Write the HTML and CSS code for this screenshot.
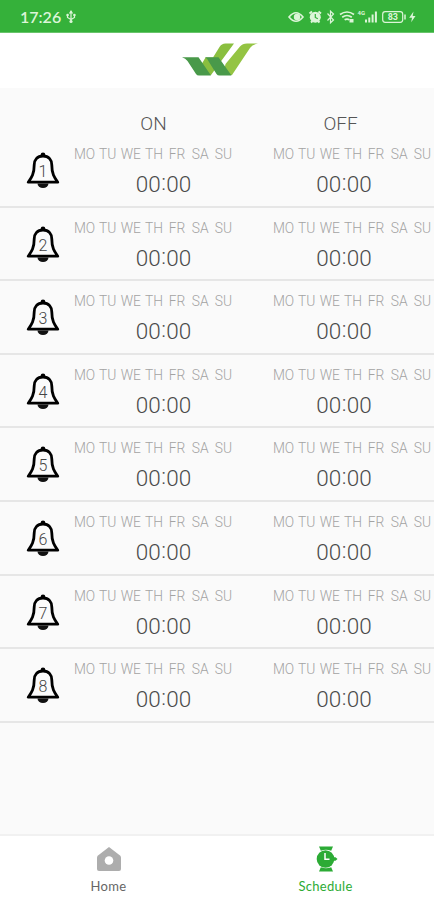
FILE: index.html
```html
<!DOCTYPE html>
<html lang="en">
  <head>
    <meta charset="UTF-8" />
    <meta name="viewport" content="width=device-width, initial-scale=1.0" />
    <title>Schedule</title>
    <link rel="stylesheet" href="styles.css">
  </head>
  <body>
    <div class="status-bar">
      <div class="status-left">
        <span class="clock">17:26</span>
        <svg class="usb" width="10" height="14" viewBox="0 0 10 14">
          <path d="M5 1v11M1.500 5v2.500L5 9.500l3.500-2V5" fill="none" stroke="currentColor" stroke-width="1.200" />
          <path d="M5 0L7.200 3.500H2.800Z" fill="currentColor" />
          <circle cx="5" cy="11.500" r="1.600" fill="currentColor" />
          <circle cx="1.600" cy="5" r="1.300" fill="currentColor" />
          <circle cx="8.400" cy="5" r="1.300" fill="currentColor" />
        </svg>
      </div>
      <svg class="status-icons" width="130" height="16" viewBox="288 9 130 16" fill="none" stroke="currentColor">
        <path d="M289 17q7-8.500 14 0q-7 8.500-14 0Z" stroke-width="1.600" />
        <circle cx="297" cy="17" r="3.200" fill="currentColor" stroke="none" />
        <circle cx="315.300" cy="17.200" r="5.500" fill="currentColor" stroke="none" />
        <path d="M309.500 13.500l2.500-2M321 13.500l-2.500-2M311 22.500l1.500-1.500M319.500 22.500L318 21" stroke-width="2" />
        <path class="cutout" d="M315.300 14v3.500l2.500 1.300" stroke-width="1.200" />
        <path d="M327.500 13.500l6 6.500-3 2.800V11.200l3 2.800-6 6.500" stroke-width="1.200" />
        <path d="M340 14.500q7-5 14 0M342.200 17.200q4.800-3.400 9.600 0M344.600 19.800q2.400-1.500 4.800 0" stroke-width="1.700" />
        <path d="M349.500 19h4v3.500h-4z" fill="currentColor" stroke="none" />
        <text class="net" x="357.500" y="15">4G</text>
        <path d="M366 22.500v-3M369.300 22.500v-5M372.600 22.500v-8M375.900 22.500V11.500" stroke-width="2" />
        <rect x="382.700" y="11.700" width="20" height="10.600" rx="2.500" stroke-width="1.200" />
        <text class="level" x="387.700" y="20.300">83</text>
        <path d="M405 14.500v5" stroke-width="1.500" />
        <path d="M413.500 11.500l-4.300 6.200h2.800l-.8 4.600 4.300-6.300h-2.800z" fill="currentColor" stroke="none" />
      </svg>
    </div>

    <header class="header">
      <svg class="logo" width="76" height="34" viewBox="182 43 76 34">
        <path fill="#8abf3f" d="M213 57.500L219.500 47q2-3.300 6-3.500h8.500L211 75H203l-3-8 5.500-9.500z" />
        <path fill="#94c443" d="M225.500 64L240 46.500q2.500-3 7-3h11q-5.500.8-8 4.500L232 75h-9z" />
        <path fill="#49994a" d="M182 57.300h16.500L211 75.500h-12q-2 0-3-1.500l-8.500-13q-2-2.800-5.500-3.700z" />
        <path fill="#49994a" d="M205 57.300h13.500L231.500 75.500h-12q-2 0-3-1.500l-7.500-12q-1.500-3.500-4-4.700z" />
      </svg>
    </header>

    <main class="schedule">
      <div class="titles">
        <span class="title">ON</span>
        <span class="title">OFF</span>
      </div>
      <div id="alarms"></div>
    </main>

    <nav class="tabbar">
      <a class="tab" href="#">
        <svg width="26" height="28" viewBox="0 0 26 28">
          <path d="M13 2L24 10.500q1 .8 1 2V24q0 2-2 2H3q-2 0-2-2V12.500q0-1.200 1-2z" fill="#adadad" />
          <circle cx="13" cy="15.500" r="4.300" fill="#fff" />
        </svg>
        <span>Home</span>
      </a>
      <a class="tab active" href="#">
        <svg width="26" height="28" viewBox="0 0 26 28">
          <path d="M6 1.500h14l-1.800 4.200q-5.200-2-10.400 0zM6 26.500h14l-1.800-4.200q-5.200 2-10.400 0z" fill="currentColor" />
          <circle cx="12.500" cy="14" r="8.800" fill="currentColor" />
          <path d="M20 12.200h2.500l2 1.800-2 1.800H20z" fill="currentColor" />
          <path d="M12 8v6.200h4.500" fill="none" stroke="#fff" stroke-width="1.500" />
        </svg>
        <span>Schedule</span>
      </a>
    </nav>

    <script>
      const days = ["MO", "TU", "WE", "TH", "FR", "SA", "SU"];
      const alarms = document.getElementById("alarms");

      function slot(type, hours, minutes) {
        return `
          <div class="slot ${type}">
            <div class="days">${days.map((d) => `<span>${d}</span>`).join("")}</div>
            <div class="time">${hours}<span class="colon">:</span>${minutes}</div>
          </div>`;
      }

      for (let i = 1; i <= 8; i++) {
        alarms.innerHTML += `
          <div class="alarm">
            <svg class="bell" width="34" height="37" viewBox="0 0 34 37">
              <path d="M11.500 31.500a5.500 4.500 0 0 0 11 0z" fill="#111" />
              <circle cx="17" cy="2.800" r="2.300" fill="#000" />
              <path d="M17 4C11 4 8.200 8 8.200 13C8.200 22 5.500 25.500 2.200 30.200H31.800C28.500 25.500 25.800 22 25.800 13C25.800 8 23 4 17 4Z" fill="#fbfbfb" stroke="#000" stroke-width="2.800" stroke-linejoin="round" />
              <text x="17" y="24.800" text-anchor="middle">${i}</text>
            </svg>
            ${slot("on", "00", "00")}
            ${slot("off", "00", "00")}
          </div>`;
      }
    </script>
  </body>
</html>
```

FILE: styles.css
```css
* {
  box-sizing: border-box;
}
body {
  margin: 0;
  height: 900px;
  display: flex;
  flex-direction: column;
  overflow: hidden;
  background-color: #fafafa;
  font-family: Roboto, "Liberation Sans", sans-serif;
}
.status-bar {
  display: flex;
  justify-content: space-between;
  align-items: center;
  height: 33px;
  padding: 2px 16px 0 20px;
  background-color: #35b13a;
  border-bottom: 1px solid #68c46b;
  color: #dcf5d8;
}
.status-left {
  display: flex;
  align-items: center;
  gap: 5px;
}
.clock {
  font-family: Lato, sans-serif;
  font-size: 16px;
  font-weight: 600;
  line-height: 20px;
}
.cutout {
  stroke: #35b13a;
}
.net {
  font-size: 6px;
  font-weight: 700;
  fill: currentColor;
  stroke: none;
}
.level {
  font-size: 9px;
  font-weight: 700;
  fill: currentColor;
  stroke: none;
}
.header {
  display: flex;
  justify-content: center;
  height: 55px;
  padding: 10px 0 0 6px;
  background-color: #fff;
}
.schedule {
  flex: 1;
}
.titles {
  display: flex;
  height: 46px;
  padding: 25px 0 0 60px;
}
.title {
  width: 187px;
  text-align: center;
  font-size: 19px;
  font-weight: 300;
  line-height: 22px;
  color: #555;
}
.alarm {
  display: flex;
  height: 73.600px;
  border-bottom: 2px solid #e6e6e6;
}
.bell {
  flex: none;
  margin: 18px 12px 0 26px;
}
.bell text {
  font-size: 16px;
  font-weight: 300;
  fill: #444;
}
.slot {
  flex: none;
  width: 163px;
}
.slot.off {
  margin-left: 36px;
}
.days {
  display: grid;
  grid-template-columns: repeat(7, 1fr);
  padding-top: 12px;
  margin-left: 1px;
  font-size: 13.800px;
  font-weight: 300;
  line-height: 16px;
  text-align: center;
  color: #a3a3a3;
}
.time {
  margin-top: 9px;
  padding-left: 20px;
  text-align: center;
  font-size: 22.500px;
  font-weight: 300;
  line-height: 26px;
  color: #4a4a4a;
}
.colon {
  position: relative;
  top: -2px;
  padding: 0 0.5px;
}
.off .time {
  padding: 0 17px 0 0;
}
.tabbar {
  display: flex;
  height: 66px;
  background-color: #fff;
  border-top: 2px solid #f1f1f1;
}
.tab {
  flex: 1;
  display: flex;
  flex-direction: column;
  align-items: center;
  gap: 5px;
  padding-top: 9px;
  font-family: Lato, sans-serif;
  font-size: 13px;
  line-height: 16px;
  letter-spacing: 0.3px;
  text-decoration: none;
  color: #666;
}
.tab.active {
  color: #2cab35;
}
```
